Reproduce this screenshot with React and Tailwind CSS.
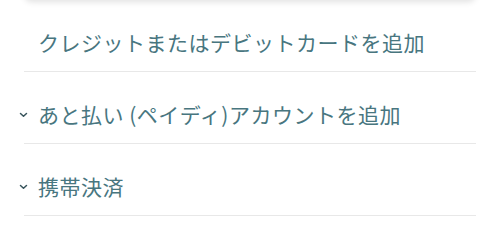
import React from "react";

const Chevron = () => (
    <svg width="9" height="6" viewBox="0 0 9 6" fill="none" className="absolute left-[-5px] top-[40px]">
        <path d="M1.5 1.5L4.5 4.3L7.5 1.5" stroke="#38555c" strokeWidth="1.5" strokeLinecap="round" strokeLinejoin="round" />
    </svg>
);

const rows = [
    { label: "クレジットまたはデビットカードを追加", chevron: false },
    { label: "あと払い (ペイディ)アカウントを追加", chevron: true },
    { label: "携帯決済", chevron: true },
];

const App = () => {
    return (
        <div className="w-[500px] h-[219px] bg-white overflow-hidden" style={{ fontFamily: '"Noto Sans CJK JP", "Noto Sans", sans-serif' }}>
            {/* bottom edge of the card above */}
            <div className="mx-6 h-[10px] -mt-[10px] bg-white rounded-b-lg shadow-[0_2px_6px_rgba(0,0,0,0.12)]" />

            <div className="mx-6">
                {rows.map((row) => (
                    <div key={row.label} className="relative h-[72px] border-b border-[#e8e8e8] pt-[27px] pl-[14px]">
                        {row.chevron && <Chevron />}
                        <span className="block text-[21px] leading-[30px] font-normal text-[#48767f] tracking-[0.5px]">{row.label}</span>
                    </div>
                ))}
            </div>
        </div>
    );
};

export default App;
